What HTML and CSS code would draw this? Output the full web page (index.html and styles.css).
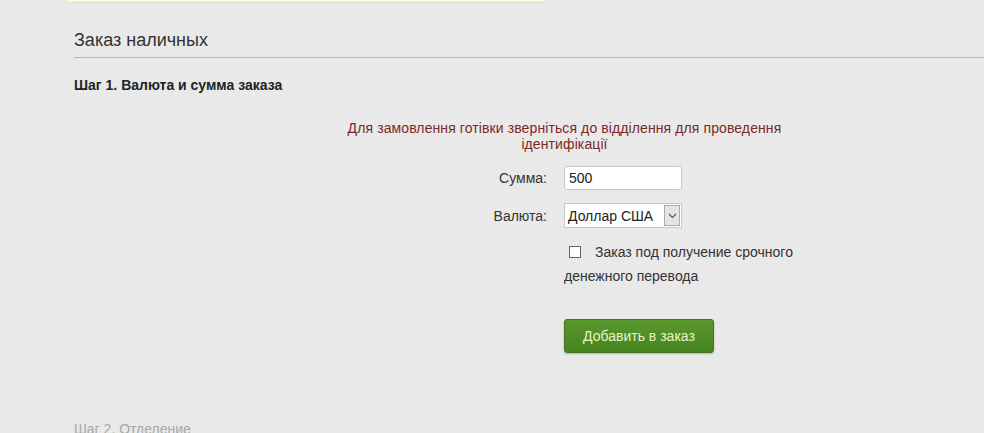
FILE: index.html
```html
<!DOCTYPE html>
<html lang="ru">
<head>
<meta charset="utf-8">
<link rel="stylesheet" href="styles.css">
</head>
<body>
<div class="top-box"></div>
<div class="content">
  <h2 class="title">Заказ наличных</h2>
  <h3 class="step">Шаг 1. Валюта и сумма заказа</h3>
  <div class="form">
    <p class="notice">Для замовлення готівки зверніться до відділення для проведення ідентифікації</p>
    <div class="grid">
      <label class="lbl">Сумма:</label>
      <input class="field" type="text" value="500">
      <label class="lbl">Валюта:</label>
      <div class="select"><span class="sel-text">Доллар США</span><span class="sel-arrow"><svg width="9" height="6" viewBox="0 0 9 6"><path d="M1 1 L4.5 4.5 L8 1" fill="none" stroke="#555" stroke-width="1.2"/></svg></span></div>
      <div></div>
      <div class="check-row"><span class="checkbox"></span>Заказ под получение срочного денежного перевода</div>
      <div></div>
      <div><button class="btn">Добавить в заказ</button></div>
    </div>
  </div>
  <h3 class="step step2">Шаг 2. Отделение</h3>
</div>
</body>
</html>
```

FILE: styles.css
```css
html, body {
  margin: 0;
  padding: 0;
}
body {
  background: #e9e9e9;
  font-family: "Liberation Sans", Arial, sans-serif;
  color: #333;
  height: 433px;
  overflow: hidden;
}
.top-box {
  margin-left: 65px;
  width: 478px;
  height: 2px;
  background: #f6f7ec;
  border: 1px solid #dfe3b5;
  border-top: none;
}
.content {
  padding-left: 74px;
}
.title {
  margin: 27px 0 0;
  font-size: 18px;
  font-weight: normal;
  line-height: 21px;
  color: #333;
  padding-bottom: 6px;
  border-bottom: 1px solid #b5b5b5;
}
.step {
  margin: 19px 0 0;
  font-size: 14px;
  font-weight: bold;
  line-height: 16px;
  color: #222;
}
.step2 {
  margin-top: 68px;
  font-weight: normal;
  color: #a8a8a8;
}
.form {
  margin-left: 266px;
  width: 449px;
  margin-top: 27px;
}
.notice {
  margin: 0;
  text-align: center;
  color: #7d2828;
  font-size: 14px;
  line-height: 16px;
  letter-spacing: 0.1px;
}
.grid {
  display: grid;
  grid-template-columns: 207px auto;
  column-gap: 17px;
  row-gap: 13px;
  margin-top: 14px;
  align-items: center;
}
.lbl {
  text-align: right;
  font-size: 14px;
  color: #333;
}
.field {
  box-sizing: border-box;
  width: 118px;
  height: 24px;
  border: 1px solid #c8c8c8;
  border-radius: 3px;
  background: #fff;
  font-family: "Liberation Sans", Arial, sans-serif;
  font-size: 14px;
  color: #222;
  padding: 0 4px;
  margin: 0;
}
.select {
  box-sizing: border-box;
  width: 118px;
  height: 25px;
  border: 1px solid #c8c8c8;
  background: #fff;
  display: flex;
  align-items: stretch;
  font-size: 14px;
  color: #222;
}
.sel-text {
  flex: 1;
  display: flex;
  align-items: center;
  padding-left: 3px;
}
.sel-arrow {
  width: 14px;
  margin: 1px;
  border: 1px solid #aaa;
  background: #e4e4e4;
  display: flex;
  align-items: center;
  justify-content: center;
}
.check-row {
  font-size: 14px;
  line-height: 24px;
  color: #333;
  width: 250px;
  margin-top: -1px;
}
.checkbox {
  display: inline-block;
  box-sizing: border-box;
  width: 12px;
  height: 12px;
  border: 1px solid #666;
  background: #fff;
  margin: 0 14px 0 5px;
  vertical-align: -1px;
}
.btn {
  margin-top: 18px;
  width: 150px;
  height: 34px;
  border: 1px solid #3f7420;
  border-radius: 3px;
  background: linear-gradient(#5a992d, #46841f);
  color: #e4f4cf;
  font-family: "Liberation Sans", Arial, sans-serif;
  font-size: 14px;
  box-shadow: 0 1px 2px rgba(0,0,0,0.25);
  padding: 0;
}
```
